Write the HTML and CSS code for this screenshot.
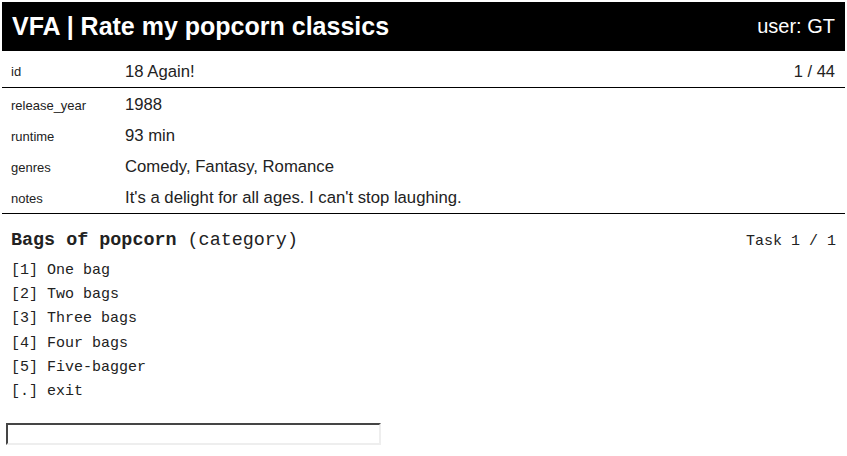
FILE: index.html
```html
<!DOCTYPE html>
<html>
<head>
<meta charset="utf-8">
<link rel="stylesheet" href="styles.css">
</head>
<body>
<header class="topbar">
  <h1 class="title">VFA | Rate my popcorn classics</h1>
  <div class="user">user: GT</div>
</header>
<section class="record">
  <div class="row row-id">
    <div class="label">id</div>
    <div class="value">18 Again!</div>
    <div class="count">1 / 44</div>
  </div>
  <div class="fields">
    <div class="row">
      <div class="label">release_year</div>
      <div class="value">1988</div>
    </div>
    <div class="row">
      <div class="label">runtime</div>
      <div class="value">93 min</div>
    </div>
    <div class="row">
      <div class="label">genres</div>
      <div class="value">Comedy, Fantasy, Romance</div>
    </div>
    <div class="row">
      <div class="label">notes</div>
      <div class="value">It's a delight for all ages. I can't stop laughing.</div>
    </div>
  </div>
</section>
<section class="task">
  <div class="task-head">
    <h2 class="question"><b>Bags of popcorn</b> (category)</h2>
    <div class="progress">Task 1 / 1</div>
  </div>
  <ul class="options">
    <li>[1] One bag</li>
    <li>[2] Two bags</li>
    <li>[3] Three bags</li>
    <li>[4] Four bags</li>
    <li>[5] Five-bagger</li>
    <li>[.] exit</li>
  </ul>
  <input class="answer" type="text">
</section>
</body>
</html>
```
FILE: styles.css
```css
html, body {
  margin: 0;
  padding: 0;
  background: #fff;
}
body {
  padding: 2px;
  font-family: "Liberation Sans", Arial, sans-serif;
  color: #222;
}
.topbar {
  background: #000;
  color: #fff;
  height: 49px;
  display: flex;
  align-items: center;
  justify-content: space-between;
  padding: 0 10px 1px 10px;
  box-sizing: border-box;
}
.title {
  margin: 0;
  font-size: 25px;
  font-weight: bold;
}
.user {
  font-size: 20px;
}
.row {
  display: flex;
  align-items: center;
  height: 31px;
  padding: 1px 10px 0 9px;
  box-sizing: border-box;
}
.row-id {
  height: 37px;
  padding-top: 5px;
  border-bottom: 1px solid #000;
}
.fields {
  border-bottom: 1px solid #000;
  padding-top: 1px;
}
.label {
  width: 114px;
  flex: none;
  font-size: 13px;
}
.value {
  font-size: 16.7px;
  flex: 1;
}
.count {
  font-size: 16.5px;
}
.task {
  padding: 0 10px 0 9px;
  font-family: "Liberation Mono", "Courier New", monospace;
}
.task-head {
  display: flex;
  justify-content: space-between;
  align-items: baseline;
  margin-top: 16px;
}
.question {
  margin: 0;
  font-size: 18.4px;
  font-weight: normal;
}
.progress {
  font-size: 15px;
  margin-right: -1px;
}
.options {
  list-style: none;
  margin: 8px 0 0 0;
  padding: 0;
  font-size: 15px;
  line-height: 24.2px;
}
.answer {
  display: block;
  margin: 19px 0 0 -5px;
  width: 375px;
  height: 22px;
  box-sizing: border-box;
  border: 2px inset #eee;
  border-top-color: #999;
  border-left-color: #999;
  padding: 0;
}
```
